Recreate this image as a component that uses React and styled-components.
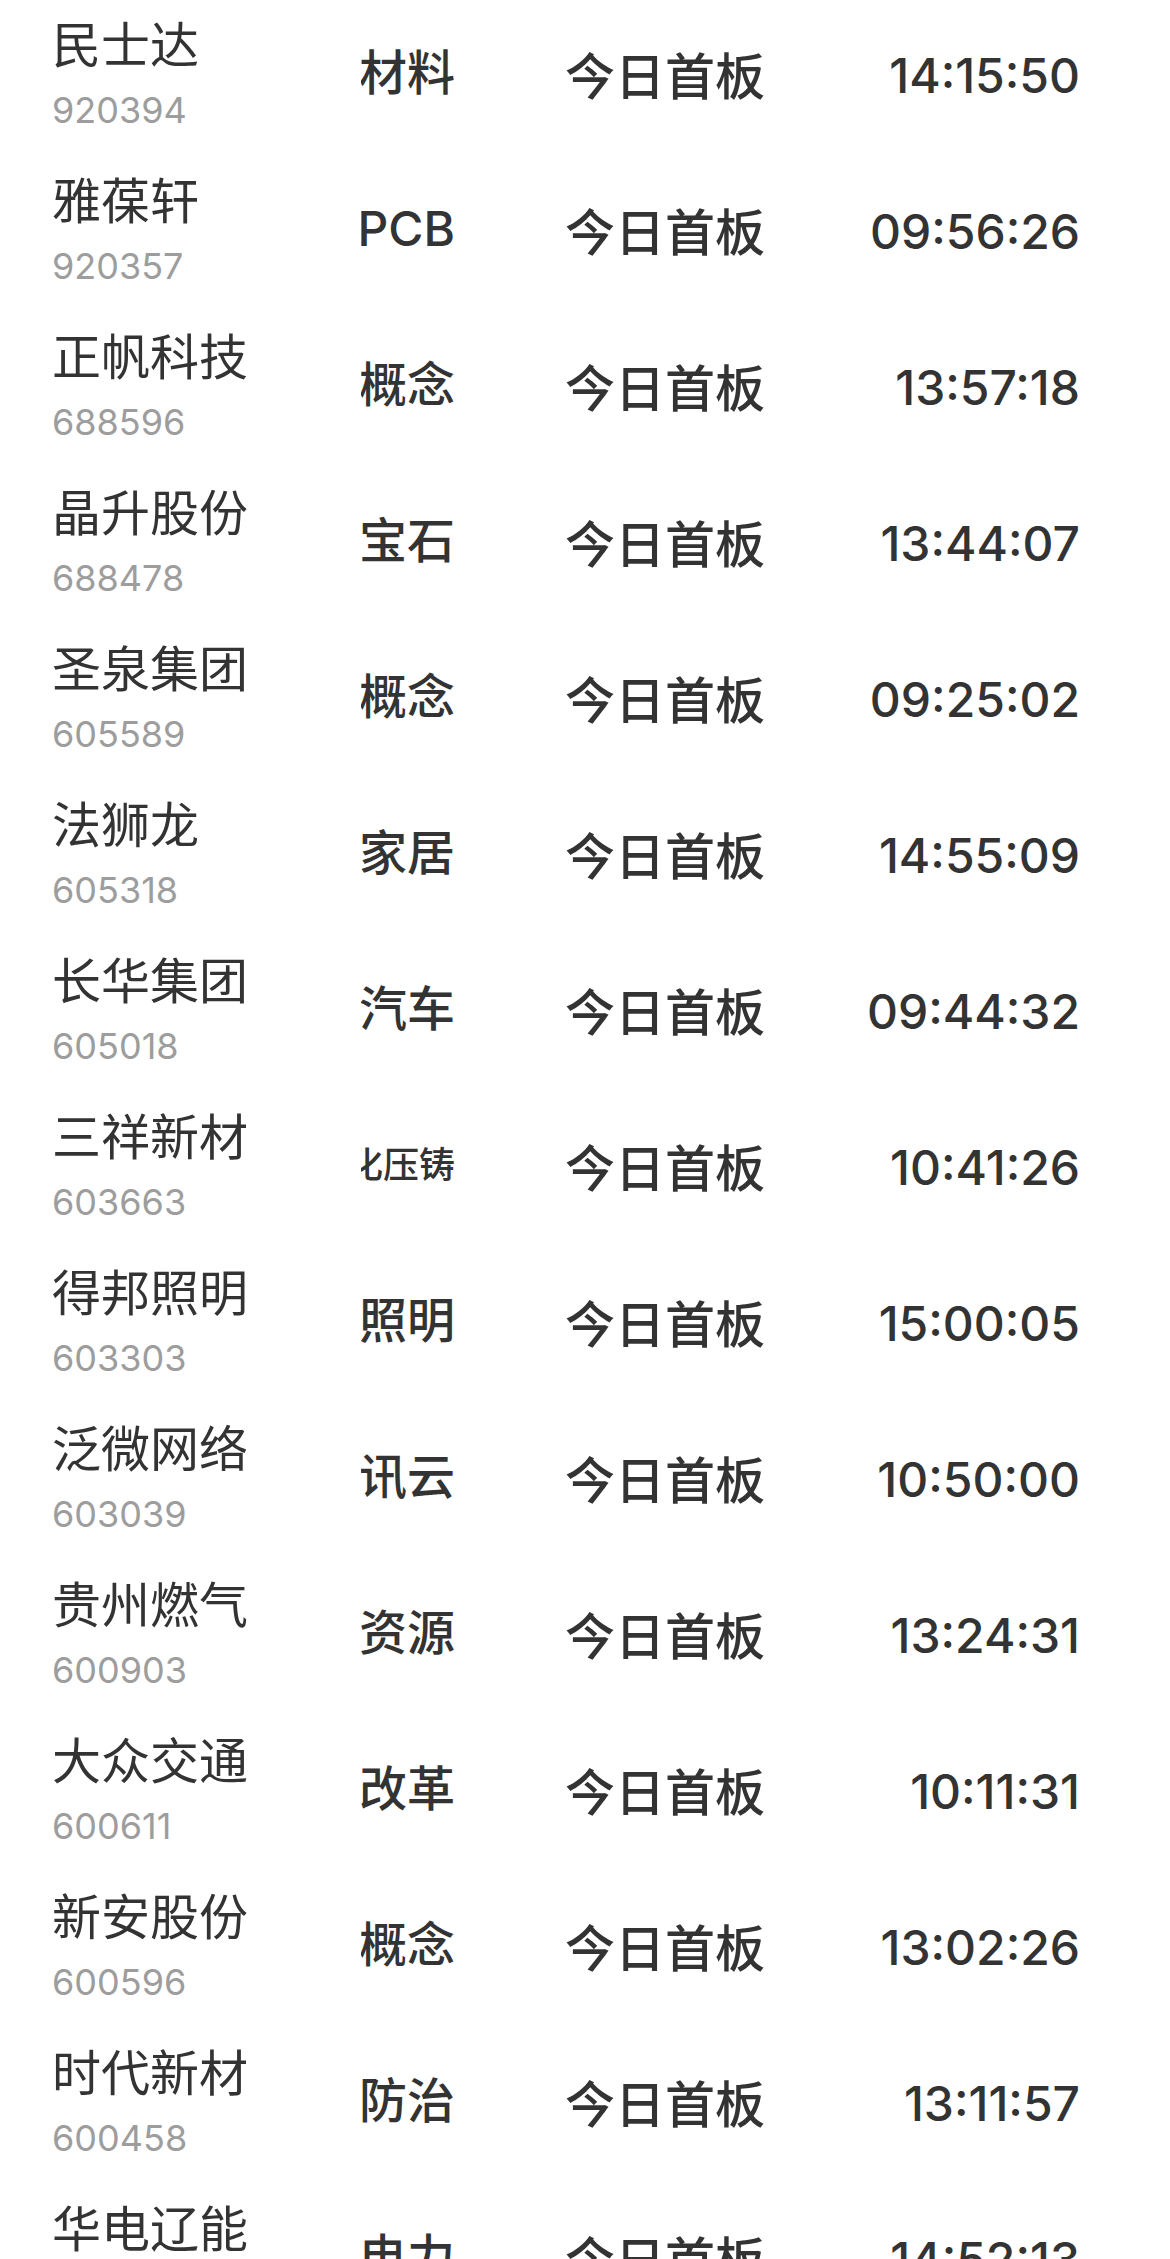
import styled, { createGlobalStyle } from "styled-components";

const GlobalStyle = createGlobalStyle`
  html,
  body {
    margin: 0;
    padding: 0;
    background: #ffffff;
    overflow: hidden;
  }

  body {
    font-family: "Noto Sans CJK SC", "Noto Sans", sans-serif;
    color: #333333;
  }
`;

const List = styled.div`
  display: flex;
  flex-direction: column;
  margin-top: -5px;
`;

const Row = styled.div`
  display: grid;
  grid-template-columns: 309px 94px 1fr auto;
  align-items: center;
  height: 156px;
  padding: 0 90px 0 52px;
`;

const NameCell = styled.div`
  display: flex;
  flex-direction: column;
`;

const Name = styled.div`
  font-size: 49px;
  line-height: 56px;
  font-weight: 400;
  color: #333333;
  white-space: nowrap;
`;

const Code = styled.div`
  margin-top: 18px;
  font-family: "Inter", "Roboto", sans-serif;
  font-size: 36px;
  line-height: 44px;
  color: #9d9d9d;
`;

// concept tag is clipped on the left when it's wider than the column
const Concept = styled.div`
  display: flex;
  justify-content: flex-end;
  overflow: hidden;
  white-space: nowrap;
  font-family: "Inter", "Noto Sans CJK SC", sans-serif;
  font-size: ${(p) => (p.$small ? "36px" : "48px")};
  font-weight: 500;
  line-height: 60px;
  color: #333333;
`;

const Status = styled.div`
  padding-left: 110px;
  font-size: 50px;
  font-weight: 500;
  line-height: 60px;
  color: #333333;
  white-space: nowrap;
`;

const Time = styled.div`
  padding-top: 6px;
  font-family: "Inter", "Roboto", sans-serif;
  font-size: 48px;
  font-weight: 500;
  line-height: 60px;
  color: #333333;
  text-align: right;
`;

const stocks = [
  { name: "民士达", code: "920394", concept: "材料", time: "14:15:50" },
  { name: "雅葆轩", code: "920357", concept: "PCB", time: "09:56:26" },
  { name: "正帆科技", code: "688596", concept: "概念", time: "13:57:18" },
  { name: "晶升股份", code: "688478", concept: "宝石", time: "13:44:07" },
  { name: "圣泉集团", code: "605589", concept: "概念", time: "09:25:02" },
  { name: "法狮龙", code: "605318", concept: "家居", time: "14:55:09" },
  { name: "长华集团", code: "605018", concept: "汽车", time: "09:44:32" },
  { name: "三祥新材", code: "603663", concept: "一体化压铸", time: "10:41:26", small: true },
  { name: "得邦照明", code: "603303", concept: "照明", time: "15:00:05" },
  { name: "泛微网络", code: "603039", concept: "讯云", time: "10:50:00" },
  { name: "贵州燃气", code: "600903", concept: "资源", time: "13:24:31" },
  { name: "大众交通", code: "600611", concept: "改革", time: "10:11:31" },
  { name: "新安股份", code: "600596", concept: "概念", time: "13:02:26" },
  { name: "时代新材", code: "600458", concept: "防治", time: "13:11:57" },
  { name: "华电辽能", code: "600396", concept: "电力", time: "14:52:13" },
];

function StockRow({ stock }) {
  const { name, code, concept, time, small } = stock;

  return (
    <Row>
      <NameCell>
        <Name>{name}</Name>
        <Code>{code}</Code>
      </NameCell>
      <Concept $small={small}>{concept}</Concept>
      <Status>今日首板</Status>
      <Time>{time}</Time>
    </Row>
  );
}

export default function App() {
  return (
    <>
      <GlobalStyle />
      <List>
        {stocks.map((stock) => (
          <StockRow key={stock.code} stock={stock} />
        ))}
      </List>
    </>
  );
}
